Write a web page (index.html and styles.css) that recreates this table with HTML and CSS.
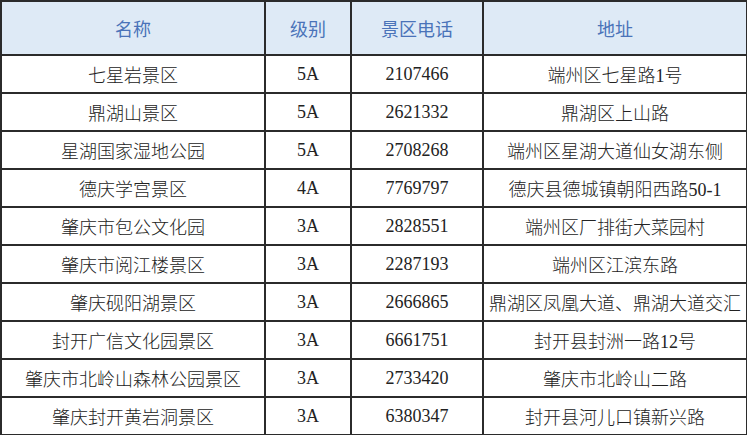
FILE: index.html
```html
<!DOCTYPE html>
<html lang="zh">
<head>
<meta charset="utf-8">
<link rel="stylesheet" href="styles.css">
</head>
<body>
<table class="spots">
  <colgroup>
    <col class="c-name"><col class="c-level"><col class="c-phone"><col class="c-addr">
  </colgroup>
  <thead>
    <tr class="head"><th>名称</th><th>级别</th><th>景区电话</th><th>地址</th></tr>
  </thead>
  <tbody>
    <tr><td>七星岩景区</td><td>5A</td><td>2107466</td><td>端州区七星路1号</td></tr>
    <tr><td>鼎湖山景区</td><td>5A</td><td>2621332</td><td>鼎湖区上山路</td></tr>
    <tr><td>星湖国家湿地公园</td><td>5A</td><td>2708268</td><td>端州区星湖大道仙女湖东侧</td></tr>
    <tr><td>德庆学宫景区</td><td>4A</td><td>7769797</td><td>德庆县德城镇朝阳西路50-1</td></tr>
    <tr><td>肇庆市包公文化园</td><td>3A</td><td>2828551</td><td>端州区厂排街大菜园村</td></tr>
    <tr><td>肇庆市阅江楼景区</td><td>3A</td><td>2287193</td><td>端州区江滨东路</td></tr>
    <tr><td>肇庆砚阳湖景区</td><td>3A</td><td>2666865</td><td>鼎湖区凤凰大道、鼎湖大道交汇</td></tr>
    <tr><td>封开广信文化园景区</td><td>3A</td><td>6661751</td><td>封开县封洲一路12号</td></tr>
    <tr><td>肇庆市北岭山森林公园景区</td><td>3A</td><td>2733420</td><td>肇庆市北岭山二路</td></tr>
    <tr><td>肇庆封开黄岩洞景区</td><td>3A</td><td>6380347</td><td>封开县河儿口镇新兴路</td></tr>
  </tbody>
</table>
</body>
</html>
```

FILE: styles.css
```css
html, body {
  margin: 0;
  padding: 0;
  background: #ffffff;
}

.spots {
  border-collapse: collapse;
  table-layout: fixed;
  width: 746px;
  font-family: "Liberation Serif", "Noto Sans CJK SC", serif;
  font-size: 18px;
  font-weight: 300;
  color: #222222;
}

.c-name { width: 264px; }
.c-level { width: 86px; }
.c-phone { width: 132px; }
.c-addr { width: 264px; }

.spots th,
.spots td {
  border: 2px solid #2b2b2b;
  padding: 0;
  text-align: center;
  white-space: nowrap;
  overflow: hidden;
}

.spots .head th {
  height: 52px;
  background: #deeaf6;
  color: #4a73b9;
  font-weight: 400;
}

.spots tbody td {
  height: 36px;
}
```
